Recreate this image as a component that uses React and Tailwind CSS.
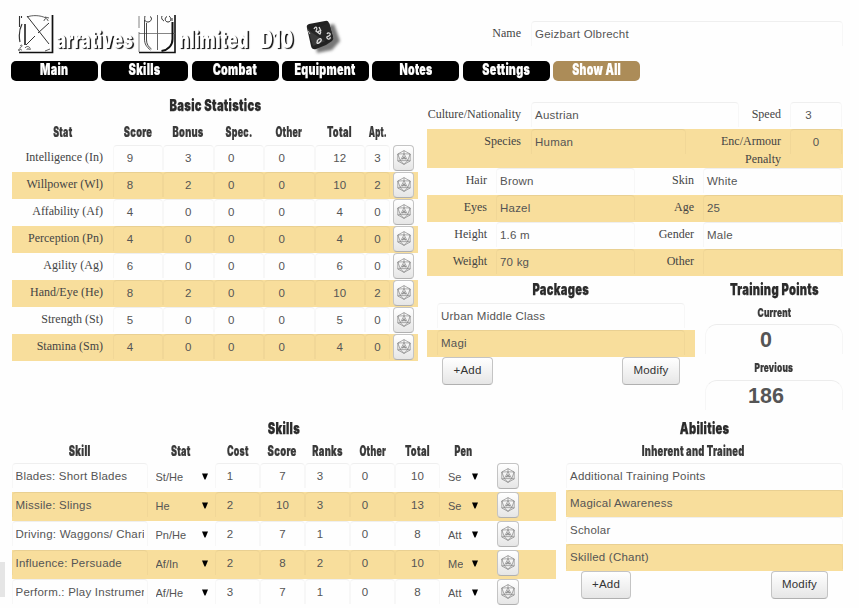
import { useLayoutEffect, useRef, useState } from "react";
import clsx from "clsx";

/* Heavy grotesque heading squeezed to a condensed width. */
function Heading({ children, width, className }) {
  const ref = useRef(null);
  const [scale, setScale] = useState(0.7);
  useLayoutEffect(() => {
    setScale(width / ref.current.offsetWidth);
  }, [width]);
  return (
    <span className="flex justify-center whitespace-nowrap" style={{ width }}>
      <span
        ref={ref}
        className={clsx("shrink-0 font-['Inter','Liberation_Sans',sans-serif] font-black", className)}
        style={{ transform: `scaleX(${scale})` }}
      >
        {children}
      </span>
    </span>
  );
}

const title = "text-[16.5px] leading-[20px] tracking-[0.4px] text-[#2b2b2b] [-webkit-text-stroke:0.25px_#2b2b2b]";
const column = "text-[14.5px] leading-[19px] tracking-[0.4px] text-[#3a3a3a] [-webkit-text-stroke:0.2px_#3a3a3a]";
const small = "text-[12px] tracking-[0.3px] text-[#3a3a3a] [-webkit-text-stroke:0.2px_#3a3a3a]";
const logoText = "text-[24px] leading-[26px] text-white";

function Field({ children, className }) {
  return (
    <div
      className={clsx(
        "h-[25px] shrink-0 overflow-hidden whitespace-nowrap rounded-t border-x border-t border-x-black/[0.03] border-t-black/[0.06] pt-[3px] text-[11.5px] leading-[18px] tracking-[0.22px] text-[#555]",
        className
      )}
    >
      {children}
    </div>
  );
}

function Label({ children, className }) {
  return (
    <div className={clsx("shrink-0 pt-[3px] text-right font-['Liberation_Serif',serif] text-[12px] leading-[18px] text-[#444]", className)}>
      {children}
    </div>
  );
}

function DieIcon() {
  return (
    <svg width="14" height="15" viewBox="0 0 14 15" fill="none" stroke="#777" strokeWidth="0.6" className="-mt-[2px]">
      <path d="M7 .6 13.2 4v7L7 14.4.8 11V4Z M7 .6v3.2 M.8 4 7 3.8 13.2 4 M7 3.8 3.3 10.6h7.4Z M.8 4l2.5 6.6L.8 11 M13.2 4l-2.5 6.6 2.5.4 M3.3 10.6 7 14.4l3.7-3.8" />
      <path d="M5.6 9.4c-.5-1.2.4-2 1.4-1.2 1-.8 1.9 0 1.4 1.2M7 6.2v3" stroke="#555" strokeWidth="0.7" />
    </svg>
  );
}

const buttonLook =
  "flex shrink-0 items-center justify-center rounded border border-[#c4c4c4] border-b-[#b0b0b0] bg-linear-to-b from-white to-[#e6e6e6] text-[11.5px] tracking-[0.2px] text-[#333]";

function RollButton({ className }) {
  return (
    <button className={clsx(buttonLook, "h-[26px]", className)}>
      <DieIcon />
    </button>
  );
}

function Button({ children, className }) {
  return <button className={clsx(buttonLook, "h-[28px]", className)}>{children}</button>;
}

function Arrow() {
  return (
    <svg width="6" height="7" viewBox="0 0 6 7" className="mt-[10px] shrink-0">
      <path d="M0 .5h6L3.500 6.500h-1Z" fill="#000" />
    </svg>
  );
}

function Logo() {
  return (
    <div className="flex h-[61px] pt-[15px] pl-[6px] text-white">
      <svg width="36" height="39" viewBox="0 0 36 39" fill="none" stroke="#333" strokeWidth="1">
        <path d="M34.500 0v37.500H1" strokeWidth="1.700" stroke="#111" />
        <path d="M1.500 1v11M3.500 1v2M1 36v-2" strokeWidth="1.100" />
        <path d="M9 1l22 28M31 8 20 18M17 21 8 30" strokeWidth="1" />
        <path d="M7 9v21" strokeWidth="1.500" stroke="#111" />
        <path d="M4 9c-3 6-3.500 11-2 18" strokeWidth="1.200" />
        <path d="M9 2c5-2 13-2 19 1M26 6c0-3 4-3 4 0M27 2l4 1" strokeWidth="0.800" />
        <path d="M2 31c2-2 3 0 1 1s-1 3 1 3M7 33c2-3 6-1 5 2M9 35c0-2 2-2 2 0M27 36l5-2" strokeWidth="0.800" />
      </svg>
      <div className="mt-[12px] ml-[2px] flex [text-shadow:2px_1px_1px_#111]">
        <Heading width={77} className={logoText}>arratives</Heading>
      </div>
      <svg width="38" height="39" viewBox="0 0 38 39" fill="none" stroke="#333" strokeWidth="1" className="ml-[5px]">
        <path d="M37 0v37.500H1" strokeWidth="1.600" stroke="#111" />
        <path d="M1 1v12M1 17v20M1 18.500h36" strokeWidth="0.800" stroke="#666" />
        <path d="M19.500 0v35" strokeWidth="1" stroke="#666" />
        <path d="M34.500 7v17c0 7-5 11-11 12" strokeWidth="2" stroke="#111" />
        <path d="M6.500 5v19c0 5 2 8 6 11M8.500 8v17c0 4 2 7 5 9" strokeWidth="0.900" />
        <path d="M7 1c-1 4 0 6 3 6s5-4 2-5.500M31 1c3 2 2 6-1 6s-4-4-1-5.500M24 1c-1 2 0 4 2 5M34 3v3" strokeWidth="1" />
      </svg>
      <div className="mt-[12px] ml-[2px] flex [text-shadow:2px_1px_1px_#111]">
        <Heading width={70} className={logoText}>nlimited</Heading>
      </div>
      <div className="mt-[12px] ml-[12px] flex [text-shadow:2px_1px_1px_#111]">
        <Heading width={33} className={logoText}>D10</Heading>
      </div>
      <svg width="40" height="40" viewBox="0 0 40 40" className="ml-[10px] mt-[2px]">
        <defs>
          <filter id="soft" x="-30%" y="-30%" width="160%" height="160%">
            <feGaussianBlur stdDeviation="1.8" />
          </filter>
        </defs>
        <path d="M11 12 31 7l6 17-8 9-15 3Z" fill="#777" filter="url(#soft)" />
        <path d="M4 11Q3 8 6 7L22 4q3-1 4 2l4 14q1 2-1 4l-6 4-10 4q-4 1-5-3Z" fill="#222" />
        <path d="m4 10 4 5 18-9 4 15-20 8Z" fill="#3a3a3a" />
        <path d="m8 15 18-9 4 14-7 5Z" fill="#191919" opacity=".6" />
        <g fill="none" stroke="#ddd" strokeWidth="1.300">
          <path d="M11 12c2-4 4-1 2 2l4 3c2-3-1-4-2-2M16 10l2 4" />
          <path d="M14 24c3-4 6-2 3 1s-4 0-2-1M24 17c1-2 4-1 3 1s-4 1-3 3 4 1 3-1" />
        </g>
        <path d="m5 14 2 3" stroke="#bbb" />
      </svg>
    </div>
  );
}

const tabs = [["Main", 28], ["Skills", 32], ["Combat", 44.5], ["Equipment", 61], ["Notes", 33], ["Settings", 47.5], ["Show All", 48.5]];

const stats = [
  ["Intelligence (In)", 9, 3, 0, 0, 12, 3],
  ["Willpower (Wl)", 8, 2, 0, 0, 10, 2],
  ["Affability (Af)", 4, 0, 0, 0, 4, 0],
  ["Perception (Pn)", 4, 0, 0, 0, 4, 0],
  ["Agility (Ag)", 6, 0, 0, 0, 6, 0],
  ["Hand/Eye (He)", 8, 2, 0, 0, 10, 2],
  ["Strength (St)", 5, 0, 0, 0, 5, 0],
  ["Stamina (Sm)", 4, 0, 0, 0, 4, 0],
];
const statCells = ["pr-[16px]", "", "pr-[15px]", "pr-[15px]", "", ""];
const statGrid = "grid grid-cols-[101px_50px_50.5px_50.5px_50.5px_50.5px_25px_28px]";

function BasicStatistics() {
  return (
    <section className="w-[406px]">
      <div className="flex h-[41px] justify-center pt-[14px]">
        <Heading width={92} className={title}>Basic Statistics</Heading>
      </div>
      <div className={clsx(statGrid, "h-[23px] justify-items-center")}>
        {[["Stat", 19.5], ["Score", 28.5], ["Bonus", 31], ["Spec.", 27], ["Other", 27], ["Total", 25], ["Apt.", 18.5]].map(([t, w]) => (
          <Heading key={t} width={w} className={column}>{t}</Heading>
        ))}
      </div>
      {stats.map(([name, ...values], i) => (
        <div key={name} className={clsx(statGrid, "h-[27px]", i % 2 && "bg-[#f8de9c]")}>
          <Label className="pr-[10px]">{name}</Label>
          {values.map((v, c) => (
            <Field key={c} className={clsx("text-center", statCells[c])}>{v}</Field>
          ))}
          <RollButton className="ml-[3px] w-[21px]" />
        </div>
      ))}
    </section>
  );
}

const traits = [
  ["Hair", "Brown", "Skin", "White"],
  ["Eyes", "Hazel", "Age", "25"],
  ["Height", "1.6 m", "Gender", "Male"],
  ["Weight", "70 kg", "Other", ""],
];

const points =
  "h-[30px] w-full rounded-t-xl border-x border-t border-x-black/[0.03] border-t-black/[0.07] pt-[1px] pr-[16px] text-center text-[21.5px] leading-[28px] font-bold text-[#555]";

function Details() {
  return (
    <section className="w-[416px]">
      <div className="flex h-[27px]">
        <Label className="w-[104px] pr-[10px]">Culture/Nationality</Label>
        <Field className="w-[208px] pl-[3px]">Austrian</Field>
        <Label className="w-[51px] pr-[9px]">Speed</Label>
        <Field className="w-[52px] pr-[15px] text-center">3</Field>
      </div>
      <div className="flex h-[39px] bg-[#f8de9c]">
        <Label className="w-[104px] pr-[10px]">Species</Label>
        <Field className="w-[155px] pl-[3px]">Human</Field>
        <Label className="w-[104px] pr-[9px] pl-[20px]">Enc/Armour Penalty</Label>
        <Field className="w-[52px] text-center">0</Field>
      </div>
      {traits.map(([a, b, c, d], i) => (
        <div key={a} className={clsx("flex h-[27px]", i % 2 && "bg-[#f8de9c]")}>
          <Label className="w-[69px] pr-[9px]">{a}</Label>
          <Field className="w-[139px] pl-[3px]">{b}</Field>
          <Label className="w-[68px] pr-[9px]">{c}</Label>
          <Field className="w-[139px] pl-[3px]">{d}</Field>
        </div>
      ))}
      <div className="flex justify-between">
        <div className="w-[268px]">
          <div className="flex h-[27px] justify-center pt-[3px]">
            <Heading width={57} className={title}>Packages</Heading>
          </div>
          <div className="h-[27px] px-[10px]"><Field className="pl-[3px]">Urban Middle Class</Field></div>
          <div className="h-[27px] bg-[#f8de9c] px-[10px]"><Field className="pl-[3px]">Magi</Field></div>
          <div className="flex justify-between pr-[15px] pl-[15px]">
            <Button className="w-[51px]">+Add</Button>
            <Button className="w-[58px]">Modify</Button>
          </div>
        </div>
        <div className="flex w-[138px] flex-col items-center">
          <div className="h-[27px] pt-[3px]"><Heading width={89} className={title}>Training Points</Heading></div>
          <Heading width={34} className={clsx(small, "leading-[19px]")}>Current</Heading>
          <div className={clsx(points, "mt-[2px]")}>0</div>
          <div className="h-[26px] pt-[5px]"><Heading width={39} className={clsx(small, "leading-[18px]")}>Previous</Heading></div>
          <div className={points}>186</div>
        </div>
      </div>
    </section>
  );
}

const skills = [
  ["Blades: Short Blades", "St/He", 1, 7, 3, 0, 10, "Se"],
  ["Missile: Slings", "He", 2, 10, 3, 0, 13, "Se"],
  ["Driving: Waggons/ Chari", "Pn/He", 2, 7, 1, 0, 8, "Att"],
  ["Influence: Persuade", "Af/In", 2, 8, 2, 0, 10, "Me"],
  ["Perform.: Play Instrumen", "Af/He", 3, 7, 1, 0, 8, "Att"],
];
const skillCells = ["pr-[15px]", "", "pr-[15px]", "pr-[15px]", ""];
const skillGrid = "grid grid-cols-[135.5px_67.5px_45px_45px_45px_45px_45px_57px_22px]";
const selectText = "shrink-0 overflow-hidden pt-[5px] text-[11px] leading-[18px] text-[#555]";

function Skills() {
  return (
    <section className="w-[544px]">
      <div className="flex h-[26px] justify-center pt-[3px]">
        <Heading width={32.5} className={title}>Skills</Heading>
      </div>
      <div className={clsx(skillGrid, "h-[22px] justify-items-center")}>
        {[["Skill", 21.5], ["Stat", 20], ["Cost", 22], ["Score", 29], ["Ranks", 30.5], ["Other", 27], ["Total", 25]].map(([t, w]) => (
          <Heading key={t} width={w} className={column}>{t}</Heading>
        ))}
        <div className="mr-[11px]"><Heading width={18} className={column}>Pen</Heading></div>
      </div>
      {skills.map(([name, stat, ...rest], i) => (
        <div key={name} className={clsx(skillGrid, "h-[29px]", i % 2 && "bg-[#f8de9c]")}>
          <Field className="pl-[2.5px]"><div className="w-[128.5px] overflow-hidden">{name}</div></Field>
          <div className="flex pl-[8px]"><div className={clsx(selectText, "w-[46px]")}>{stat}</div><Arrow /></div>
          {rest.slice(0, 5).map((v, c) => (
            <Field key={c} className={clsx("text-center", skillCells[c])}>{v}</Field>
          ))}
          <div className="flex pl-[8px]"><div className={clsx(selectText, "mr-[9px] w-[15px]")}>{rest[5]}</div><Arrow /></div>
          <RollButton className="w-[22px]" />
        </div>
      ))}
    </section>
  );
}

function Abilities() {
  return (
    <section className="w-[277px]">
      <div className="flex h-[26px] justify-center pt-[3px]">
        <Heading width={49.5} className={title}>Abilities</Heading>
      </div>
      <div className="flex h-[22px] justify-center pr-[23px]">
        <Heading width={102.5} className={column}>Inherent and Trained</Heading>
      </div>
      {["Additional Training Points", "Magical Awareness", "Scholar", "Skilled (Chant)"].map((a, i) => (
        <div key={a} className={clsx("h-[27px]", i % 2 && "bg-[#f8de9c]")}>
          <Field className="pl-[3px]">{a}</Field>
        </div>
      ))}
      <div className="flex justify-between pr-[15px] pl-[15px]">
        <Button className="w-[50px]">+Add</Button>
        <Button className="w-[57px]">Modify</Button>
      </div>
    </section>
  );
}

export default function App() {
  return (
    <div className="relative h-[608px] w-[859px] overflow-hidden bg-[#fefefe] pl-[12px] font-['Liberation_Sans',Arial,sans-serif]">
      <header className="flex h-[61px] w-[831px] justify-between">
        <Logo />
        <div className="flex pt-[21px]">
          <Label className="pr-[10px]">Name</Label>
          <Field className="w-[312px] pl-[3px]">Geizbart Olbrecht</Field>
        </div>
      </header>
      <nav className="-ml-px flex gap-[3.33px]">
        {tabs.map(([t, w]) => (
          <div key={t} className={clsx("flex h-[20px] w-[87px] justify-center rounded-[5px]", t === "Show All" ? "bg-[#ac8c58]" : "bg-black")}>
            <Heading width={w} className="text-[15.5px] leading-[18px] tracking-[0.4px] text-white [-webkit-text-stroke:0.2px_#fff]">{t}</Heading>
          </div>
        ))}
      </nav>
      <main>
        <div className="flex h-[334px] gap-[9px]">
          <BasicStatistics />
          <div className="pt-[21px]"><Details /></div>
        </div>
        <div className="flex gap-[10px]">
          <Skills />
          <Abilities />
        </div>
      </main>
      <div className="absolute top-[562px] left-0 h-[35px] w-[5px] bg-[#e5e5e5]" />
    </div>
  );
}
